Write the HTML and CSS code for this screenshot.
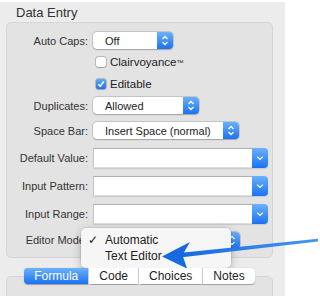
FILE: index.html
```html
<!DOCTYPE html>
<html lang="en">
<head>
    <meta charset="UTF-8">
    <title>Data Entry</title>
    <link rel="stylesheet" href="styles.css">
</head>
<body>
    <div class="panel">
        <div class="title">Data Entry</div>

        <div class="group">
            <div class="row h21">
                <span class="lbl">Auto Caps:</span>
                <div class="popup w-caps"><span>Off</span>
                    <span class="stepper"><svg width="16" height="17" viewBox="0 0 16 17"><path d="M5.5 7 L8 4.5 L10.5 7 M5.5 10 L8 12.5 L10.5 10" /></svg></span>
                </div>
            </div>
            <div class="row h22">
                <span class="lbl"></span>
                <label class="check"><span class="box"></span>Clairvoyance<sup>™</sup></label>
            </div>
            <div class="row h21">
                <span class="lbl"></span>
                <label class="check"><span class="box on"><svg width="10" height="10" viewBox="0 0 10 10"><path d="M2.3 5.2 L4.2 7.3 L7.8 2.6" /></svg></span>Editable</label>
            </div>
            <div class="row h23">
                <span class="lbl">Duplicates:</span>
                <div class="popup w-dup"><span>Allowed</span>
                    <span class="stepper"><svg width="16" height="17" viewBox="0 0 16 17"><path d="M5.5 7 L8 4.5 L10.5 7 M5.5 10 L8 12.5 L10.5 10" /></svg></span>
                </div>
            </div>
            <div class="row h27">
                <span class="lbl">Space Bar:</span>
                <div class="popup w-space"><span>Insert Space (normal)</span>
                    <span class="stepper"><svg width="16" height="17" viewBox="0 0 16 17"><path d="M5.5 7 L8 4.5 L10.5 7 M5.5 10 L8 12.5 L10.5 10" /></svg></span>
                </div>
            </div>
            <div class="row h28">
                <span class="lbl">Default Value:</span>
                <div class="combo"><span class="field"></span>
                    <span class="drop"><svg width="16" height="20" viewBox="0 0 16 20"><path d="M5.2 8.6 L8 11.4 L10.8 8.6" /></svg></span>
                </div>
            </div>
            <div class="row h28">
                <span class="lbl">Input Pattern:</span>
                <div class="combo"><span class="field"></span>
                    <span class="drop"><svg width="16" height="20" viewBox="0 0 16 20"><path d="M5.2 8.6 L8 11.4 L10.8 8.6" /></svg></span>
                </div>
            </div>
            <div class="row h27">
                <span class="lbl">Input Range:</span>
                <div class="combo"><span class="field"></span>
                    <span class="drop"><svg width="16" height="20" viewBox="0 0 16 20"><path d="M5.2 8.6 L8 11.4 L10.8 8.6" /></svg></span>
                </div>
            </div>
            <div class="row h26">
                <span class="lbl">Editor Mode:</span>
                <!-- value is hidden under the open menu -->
                <div class="popup w-editor">
                    <span class="stepper"><svg width="16" height="17" viewBox="0 0 16 17"><path d="M5.5 7 L8 4.5 L10.5 7 M5.5 10 L8 12.5 L10.5 10" /></svg></span>
                </div>
            </div>
        </div>

        <div class="tabview">
            <div class="tabs">
                <span class="tab active">Formula</span>
                <span class="tab">Code</span>
                <span class="tab">Choices</span>
                <span class="tab">Notes</span>
            </div>
            <div class="tabbox"></div>
        </div>
    </div>

    <!-- open popup menu for Editor Mode -->
    <div class="menu">
        <div class="menu-item"><span class="tick">✓</span>Automatic</div>
        <div class="menu-item">Text Editor</div>
    </div>

    <svg class="arrow" width="320" height="296" viewBox="0 0 320 296">
        <defs>
            <linearGradient id="arrowGrad" x1="0" y1="0" x2="1" y2="0">
                <stop offset="0" stop-color="#1769e0"/>
                <stop offset="1" stop-color="#4596f2"/>
            </linearGradient>
        </defs>
        <polygon fill="url(#arrowGrad)" points="318,238.8 318,241.6 182,257.2 181.5,252.8" />
        <polygon fill="#1769e0" points="162,256.5 190,242 182.5,255 187,268.5" />
    </svg>
</body>
</html>
```

FILE: styles.css
```css
* { margin: 0; padding: 0; box-sizing: border-box; }
body {
    font-family: "Liberation Sans", Arial, sans-serif;
    background: white;
    color: #2b2b2b;
    width: 320px;
    height: 296px;
    overflow: hidden;
    position: relative;
}
.panel {
    margin-top: 2px;
    width: 285px;
    height: 294px;
    background: #ececec;
    overflow: hidden;
}
.title {
    height: 20px;
    line-height: 21px;
    padding-left: 16px;
    font-size: 13px;
    color: #333;
}
.group {
    margin: 0 12px 0 6px;
    background: #e3e3e3;
    border: 1px solid #d6d6d6;
    border-radius: 5px;
    padding: 7px 0 4px;
}
.row { display: flex; align-items: center; }
.h21 { height: 21px; }
.h22 { height: 22px; }
.h23 { height: 23px; }
.h26 { height: 26px; }
.h27 { height: 27px; }
.h28 { height: 28px; }
.lbl {
    width: 81px;
    margin-right: 5px;
    text-align: right;
    font-size: 11px;
    color: #333;
    white-space: nowrap;
}

/* popup buttons */
.popup {
    height: 17px;
    display: flex;
    align-items: center;
    background: white;
    border-radius: 4px;
    padding-left: 12px;
    font-size: 11px;
    color: #222;
    box-shadow: 0 0 0 0.5px rgba(0,0,0,0.22), 0 0.5px 1.5px rgba(0,0,0,0.2);
}
.popup .stepper {
    margin-left: auto;
    width: 16px;
    height: 17px;
    border-radius: 0 4px 4px 0;
    background: linear-gradient(#6bb0fb, #1b72f3);
}
.stepper svg, .drop svg { display: block; fill: none; stroke: white; stroke-width: 1.3; }
.w-caps { width: 80px; }
.w-dup { width: 106px; }
.w-space { width: 146px; }
.w-editor { width: 147px; }

/* combo boxes */
.combo {
    width: 175px;
    height: 20px;
    display: flex;
    box-shadow: 0 0.5px 1px rgba(0,0,0,0.12);
    border-radius: 0 4px 4px 0;
}
.combo .field {
    flex: 1;
    background: white;
    border-top: 1px solid #b0b0b0;
    border-left: 1px solid #c6c6c6;
    border-bottom: 1px solid #dcdcdc;
}
.combo .drop {
    width: 16px;
    height: 20px;
    border-radius: 0 4px 4px 0;
    background: linear-gradient(#6bb0fb, #1b72f3);
}

/* checkboxes */
.check {
    display: flex;
    align-items: center;
    margin-left: 3px;
    font-size: 11.5px;
    color: #222;
}
.check sup { font-size: 7px; vertical-align: 4px; }
.box {
    width: 10px;
    height: 10px;
    margin-right: 4px;
    background: white;
    border-radius: 2px;
    box-shadow: 0 0 0 0.5px rgba(0,0,0,0.35), 0 0.5px 1px rgba(0,0,0,0.15);
}
.box.on { background: linear-gradient(#62a9fa, #1d74f2); }
.box svg { display: block; fill: none; stroke: white; stroke-width: 1.6; }

/* tab view */
.tabview { margin: 10px 12px 0 6px; }
.tabs {
    position: relative;
    z-index: 1;
    display: flex;
    justify-content: center;
}
.tab {
    height: 16px;
    line-height: 16px;
    padding: 0 10px;
    font-size: 12px;
    color: #222;
    background: white;
    border-left: 1px solid #cfcfcf;
    box-shadow: 0 0.5px 1px rgba(0,0,0,0.3);
}
.tab:first-child { border-left: none; border-radius: 4px 0 0 4px; }
.tab:last-child { border-radius: 0 4px 4px 0; }
.tab.active {
    color: white;
    background: linear-gradient(#6cb2fb, #1a72f3);
}
.tabbox {
    margin-top: -8px;
    height: 40px;
    background: #e3e3e3;
    border: 1px solid #d6d6d6;
    border-radius: 5px;
}

/* open menu */
.menu {
    position: absolute;
    left: 81px;
    top: 228px;
    width: 150px;
    height: 40px;
    padding: 4px 0;
    background: rgba(246,246,246,0.98);
    border-radius: 5px;
    box-shadow: 0 0 0 0.5px rgba(0,0,0,0.15), 0 3px 10px rgba(0,0,0,0.25);
    font-size: 12px;
    color: #222;
}
.menu-item {
    position: relative;
    height: 16px;
    line-height: 16px;
    padding-left: 24px;
}
.tick { position: absolute; left: 7px; top: 0; font-size: 12px; }

.arrow { position: absolute; left: 0; top: 0; }
```
